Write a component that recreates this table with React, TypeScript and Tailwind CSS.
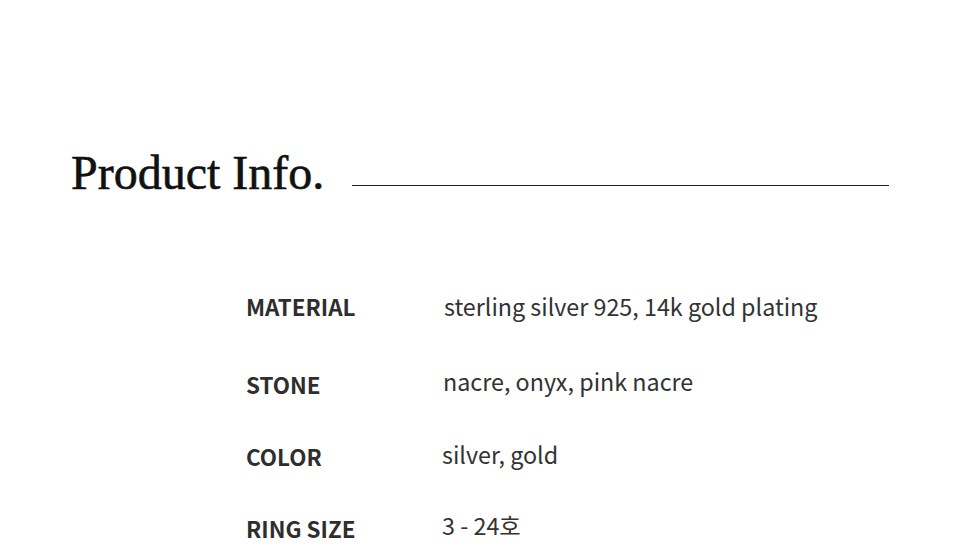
const rows = [
  { label: 'MATERIAL', value: 'sterling silver 925, 14k gold plating', cls: 'h-[78px]', off: 'mt-0 ml-[1px]' },
  { label: 'STONE', value: 'nacre, onyx, pink nacre', cls: 'h-[72px]', off: '-mt-[3px]' },
  { label: 'COLOR', value: 'silver, gold', cls: 'h-[72px]', off: '-mt-[2px] -ml-[1px]' },
  { label: 'RING SIZE', value: '3 - 24호', cls: 'h-[72px]', off: '-mt-[3px] -ml-[1px]' },
];

export default function App() {
  return (
    <div className="w-[960px] h-[546px] overflow-hidden bg-white">
      <div className="flex items-center pt-[144px] pl-[71px] pr-[71px]">
        <h2 className="font-['Liberation_Serif',serif] text-[48px] leading-[58px] text-[#111] whitespace-nowrap [-webkit-text-stroke:0.6px_#111]">
          Product Info.
        </h2>
        <div className="flex-1 h-px bg-[#222] ml-[28px] mt-[24px]" />
      </div>
      <div className="pl-[246px] pt-[88px] font-['Noto_Sans_CJK_KR','Noto_Sans',sans-serif] leading-[32px]">
        {rows.map(r => (
          <div key={r.label} className={`flex items-start ${r.cls}`}>
            <div className="w-[197px] text-[22.4px] font-bold text-[#2e2e2e]">{r.label}</div>
            <div className={`text-[23.3px] text-[#333] ${r.off}`}>{r.value}</div>
          </div>
        ))}
      </div>
    </div>
  );
}
